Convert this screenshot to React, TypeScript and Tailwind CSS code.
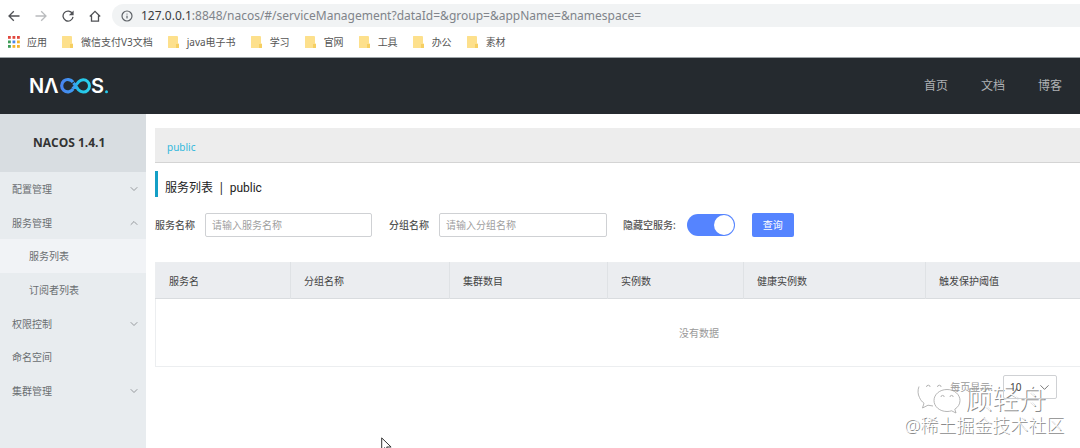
import { useState } from "react";
import { ChevronDown, ChevronUp, Info } from "lucide-react";

const bookmarks = ["微信支付V3文档", "java电子书", "学习", "官网", "工具", "办公", "素材"];

const menu = [
  { label: "配置管理", icon: "down" },
  { label: "服务管理", icon: "up" },
  { label: "服务列表", child: true, active: true },
  { label: "订阅者列表", child: true },
  { label: "权限控制", icon: "down" },
  { label: "命名空间" },
  { label: "集群管理", icon: "down" },
];

const columns = [
  { label: "服务名", width: "w-[135px]" },
  { label: "分组名称", width: "w-[159px]" },
  { label: "集群数目", width: "w-[158px]" },
  { label: "实例数", width: "w-[136px]" },
  { label: "健康实例数", width: "w-[182px]" },
  { label: "触发保护阈值", width: "" },
];

function ToolbarIcon({ d, fill }: { d: string; fill?: string }) {
  return (
    <svg width="12" height="12" viewBox="0 0 12 12" fill="none" stroke="currentColor" strokeWidth="1.300" aria-hidden="true">
      <path d={d} />
      {fill && <path d={fill} fill="currentColor" stroke="none" />}
    </svg>
  );
}

function AppsIcon() {
  const colors = ["#e0483e", "#e0483e", "#e0483e", "#3f9d58", "#4a86e8", "#f2b32a", "#3f9d58", "#f2b32a", "#f2b32a"];
  return (
    <svg width="12" height="12" viewBox="0 0 12 12" aria-hidden="true">
      {colors.map((c, i) => (
        <rect key={i} x={(i % 3) * 4.5} y={Math.floor(i / 3) * 4.5} width="2.8" height="2.8" fill={c} />
      ))}
    </svg>
  );
}

function FolderIcon() {
  return (
    <svg width="11" height="12" viewBox="0 0 11 12" aria-hidden="true">
      <path d="M0.5 0H9a1 1 0 0 1 1 1v6l1 1v4H0.5a.5.5 0 0 1-.5-.5V.5A.5.5 0 0 1 .5 0Z" fill="#fde08c" />
      <path d="M8 8h3v3.500a.5.5 0 0 1-.5.5H8Z" fill="#f6cf62" />
    </svg>
  );
}

function NacosLogo() {
  return (
    <svg width="80" height="30" viewBox="0 -5 80 30" className="overflow-visible" role="img" aria-label="NACOS">
      <defs>
        <linearGradient id="loop" gradientUnits="userSpaceOnUse" x1="29" y1="0" x2="62" y2="0">
          <stop offset="0" stopColor="#4a7ff0" />
          <stop offset="0.45" stopColor="#3d9bf0" />
          <stop offset="0.6" stopColor="#22c3e6" />
          <stop offset="1" stopColor="#2fd3f0" />
        </linearGradient>
      </defs>
      <g className="font-['Inter'] text-[20px] font-semibold" fill="#ffffff">
        <text x="-1" y="17">N</text>
        <text x="14" y="17">Λ</text>
        <text x="61" y="17">S</text>
      </g>
      <path d="M43 6.200A6.200 6.200 0 1 0 43 13.200" fill="none" stroke="url(#loop)" strokeWidth="3.200" />
      <path
        d="M42.500 12.800C44.500 11.300 46.500 8.300 48.700 5.700a6.200 6.200 0 1 1 0 8.400L43.500 7"
        fill="none"
        stroke="url(#loop)"
        strokeWidth="3"
        strokeLinejoin="round"
      />
      <circle cx="76.500" cy="15.800" r="1.500" fill="#27c9ea" />
    </svg>
  );
}

function WeChatMark() {
  return (
    <svg width="44" height="36" viewBox="0 0 44 36" fill="#ffffff" stroke="#a3a3a3" strokeWidth="0.8" aria-hidden="true">
      <path d="M2 7.500C.5 11 .8 15.500 2.500 18.500 3.600 21 5 22.800 7 24.200L5.500 29l5.500-2.800 5 .8" fill="none" />
      <path d="M9.500 8a1.800 1.800 0 0 1 3.600 0M20.500 8a1.800 1.800 0 0 1 3.600 0" fill="none" />
      <path d="M30 10.500c-7.400 0-13 5-13 11s5.600 11 13 11c1.600 0 3.200-.2 4.600-.7L39 34l-1.200-3.800c3.200-2 5.200-5 5.200-8.700 0-6-5.600-11-13-11Z" />
      <path d="M24 18a1.600 1.600 0 0 1 3.200 0M33 18a1.600 1.600 0 0 1 3.200 0" fill="none" />
    </svg>
  );
}

export default function App() {
  const [hideEmpty, setHideEmpty] = useState(true);

  return (
    <div className="relative isolate flex min-h-screen flex-col overflow-hidden bg-white font-['Noto_Sans','Noto_Sans_CJK_SC',sans-serif] text-[10px] leading-4 text-[#555]">
      <div className="border-b border-[#9fa6a9] bg-white pt-1">
        <div className="flex h-[23px] items-center">
          <div className="flex w-28 shrink-0 items-center gap-[15px] pl-2 text-[#505256]">
            <button aria-label="后退"><ToolbarIcon d="M11.500 6H1.200M5.800 1.200 1 6l4.800 4.800" /></button>
            <button aria-label="前进" className="text-[#b9bbbd]"><ToolbarIcon d="M.5 6h10.300M6.200 1.200 11 6l-4.800 4.800" /></button>
            <button aria-label="刷新"><ToolbarIcon d="M10.400 3.600A5 5 0 1 0 11 6.800" fill="M11.600.500v4.700H6.900Z" /></button>
            <button aria-label="主页"><ToolbarIcon d="M.8 6.500 6 1.300l5.200 5.200M2.500 5.500v5.600h7V5.500" /></button>
          </div>
          <div className="flex h-full grow items-center gap-2 rounded-l-full bg-[#f1f3f4] pl-[9px]">
            <Info size={12} strokeWidth={2.4} className="text-[#5f6368]" />
            <div className="whitespace-nowrap text-[12px] text-[#80848a]">
              <span className="text-[#3a3c3f]">127.0.0.1</span>:8848/nacos/#/serviceManagement?dataId=&amp;group=&amp;appName=&amp;namespace=
            </div>
          </div>
        </div>
        <nav className="flex h-[30px] items-center gap-[15px] pl-2" aria-label="书签">
          <a href="#apps" className="flex items-center gap-[7px]"><AppsIcon />应用</a>
          {bookmarks.map((b) => (
            <a key={b} href="#bookmark" className="flex items-center gap-2 whitespace-nowrap"><FolderIcon />{b}</a>
          ))}
        </nav>
      </div>

      <header className="flex h-14 items-center justify-between bg-[#252a2f] pr-[18px] pl-[30px]">
        <a href="#home"><NacosLogo /></a>
        <nav className="flex gap-[33px] text-[12px] text-[#aeb1b4]" aria-label="导航">
          <a href="#home">首页</a>
          <a href="#docs">文档</a>
          <a href="#blog">博客</a>
        </nav>
      </header>

      <div className="flex grow">
        <aside className="w-[146px] shrink-0 bg-[#e8ecef]">
          <h1 className="flex h-[58px] items-center bg-[#d8dde1] pl-[33px] font-['Open_Sans','Noto_Sans'] text-[12px] font-bold text-[#333]">NACOS 1.4.1</h1>
          <ul className="grid h-[236px] grid-rows-7 text-[#6a6e71]">
            {menu.map((m) => (
              <li key={m.label} className={m.active ? "bg-[#f1f3f6]" : ""}>
                <a href="#menu" className={`flex h-full items-center justify-between pr-[6px] ${m.child ? "pl-[29px]" : "pl-3"}`}>
                  {m.label}
                  {m.icon === "down" && <ChevronDown size={12} strokeWidth={1.8} className="text-[#8c9093]" />}
                  {m.icon === "up" && <ChevronUp size={12} strokeWidth={1.8} className="text-[#8c9093]" />}
                </a>
              </li>
            ))}
          </ul>
        </aside>

        <main className="relative min-w-0 grow overflow-hidden pt-[14px] pl-[9px]">
          <div className="flex h-[35px] items-center border-b border-[#d4d4d4] bg-[#ededed] px-3 pt-1">
            <a href="#public" className="text-[#32b8dc]">public</a>
          </div>
          <h2 className="mt-2 flex h-[26px] items-center gap-[5px] border-l-3 border-[#149fc6] pt-[7px] pl-[7px] text-[12px] text-[#222]">
            <span>服务列表</span>
            <span>|</span>
            <span className="font-['Roboto']">public</span>
          </h2>

          <form className="mt-4 flex h-6 items-center whitespace-nowrap" onSubmit={(e) => e.preventDefault()}>
            <label htmlFor="service" className="mr-[10px] font-medium">服务名称</label>
            <input id="service" placeholder="请输入服务名称" className="mr-[17px] h-6 w-[167px] rounded-xs border border-[#cfd1d4] px-[6px] placeholder:text-[#a0a0a0]" />
            <label htmlFor="group" className="mr-[10px] font-medium">分组名称</label>
            <input id="group" placeholder="请输入分组名称" className="mr-4 h-6 w-[168px] rounded-xs border border-[#cfd1d4] px-[6px] placeholder:text-[#a0a0a0]" />
            <label htmlFor="hide" className="mr-[11px] font-medium">隐藏空服务:</label>
            <input
              id="hide"
              type="checkbox"
              role="switch"
              checked={hideEmpty}
              onChange={(e) => setHideEmpty(e.target.checked)}
              className="mr-[17px] flex h-[22px] w-12 appearance-none rounded-full bg-[#c4c8ce] p-px before:size-5 before:rounded-full before:bg-white checked:justify-end checked:bg-[#5584ff]"
            />
            <button className="h-6 w-[42px] rounded-xs bg-[#5584ff] text-white">查询</button>
          </form>

          <table className="mt-[25px] w-[1088px] table-fixed border-collapse border border-[#eceef0]">
            <thead>
              <tr className="h-9 border-b border-[#d9dcdf] bg-[#ebedf0] text-[#444]">
                {columns.map((c) => (
                  <th key={c.label} className={`border-r border-[#dfe2e5] pl-[13px] text-left font-normal ${c.width}`}>{c.label}</th>
                ))}
              </tr>
            </thead>
            <tbody>
              <tr className="h-[68px]">
                <td colSpan={6} className="text-center text-[#999]">没有数据</td>
              </tr>
            </tbody>
          </table>

          <div className="mt-2 flex items-center justify-end gap-[10px] pr-[23px] text-[#999]">
            <label htmlFor="size">每页显示:</label>
            <div className="grid items-center">
              <select id="size" className="col-start-1 row-start-1 h-6 w-[54px] appearance-none rounded-xs border border-[#cfd1d4] pl-[6px] text-[#444]">
                <option>10</option>
              </select>
              <ChevronDown size={15} strokeWidth={1.6} className="pointer-events-none col-start-1 row-start-1 mr-[5px] justify-self-end text-[#777]" />
            </div>
          </div>

          <svg className="absolute top-[323px] left-[235px]" width="11" height="17" viewBox="0 0 11 17" aria-hidden="true">
            <path d="M.7.900v12.600l3-2.800 2 4.800 2-.9-2-4.600h4.400Z" fill="#fff" stroke="#333" strokeWidth="1" />
          </svg>
        </main>
      </div>

      <div className="pointer-events-none absolute right-4 bottom-[13px] -z-10 flex flex-col items-end font-light whitespace-nowrap text-white [text-shadow:1px_1px_0_#8a8a8a]">
        <div className="mr-[18px] flex items-center gap-1 text-[27px] leading-7">
          <WeChatMark />
          <span className="pt-1">顾轻舟</span>
        </div>
        <div className="text-[18px] leading-5">@稀土掘金技术社区</div>
      </div>
    </div>
  );
}
